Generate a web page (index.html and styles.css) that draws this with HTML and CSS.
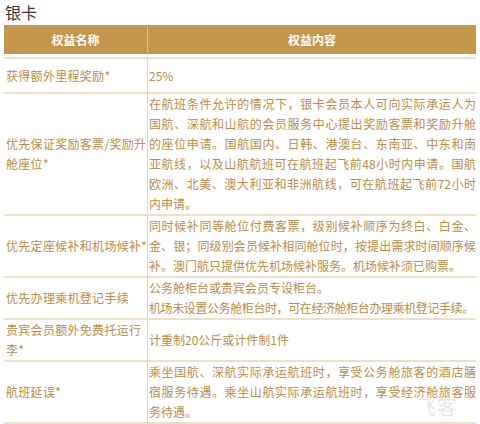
FILE: index.html
```html
<!DOCTYPE html>
<html lang="zh-CN">
<head>
<meta charset="utf-8">
<title>银卡</title>
<link rel="stylesheet" href="styles.css">
</head>
<body>
<div class="page">
  <h2 class="title">银卡</h2>
  <table class="benefits">
    <colgroup><col class="c-name"><col class="c-desc"></colgroup>
    <thead>
      <tr><th class="name">权益名称</th><th>权益内容</th></tr>
    </thead>
    <tbody>
      <tr class="r1"><td class="name">获得额外里程奖励*</td><td>25%</td></tr>
      <tr>
        <td class="name"><span class="ln">优先保证奖励客票/奖励升</span><span class="ln">舱座位*</span></td>
        <td><span class="ln j">在航班条件允许的情况下，银卡会员本人可向实际承运人为</span><span class="ln j">国航、深航和山航的会员服务中心提出奖励客票和奖励升舱</span><span class="ln j">的座位申请。国航国内、日韩、港澳台、东南亚、中东和南</span><span class="ln j">亚航线，以及山航航班可在航班起飞前48小时内申请。国航</span><span class="ln j">欧洲、北美、澳大利亚和非洲航线，可在航班起飞前72小时</span><span class="ln">内申请。</span></td>
      </tr>
      <tr>
        <td class="name">优先定座候补和机场候补*</td>
        <td><span class="ln j">同时候补同等舱位付费客票，级别候补顺序为终白、白金、</span><span class="ln j">金、银；同级别会员候补相同舱位时，按提出需求时间顺序候</span><span class="ln">补。澳门航只提供优先机场候补服务。机场候补须已购票。</span></td>
      </tr>
      <tr>
        <td class="name">优先办理乘机登记手续</td>
        <td><span class="ln">公务舱柜台或贵宾会员专设柜台。</span><span class="ln tight">机场未设置公务舱柜台时，可在经济舱柜台办理乘机登记手续。</span></td>
      </tr>
      <tr>
        <td class="name"><span class="ln">贵宾会员额外免费托运行</span><span class="ln">李*</span></td>
        <td>计重制20公斤或计件制1件</td>
      </tr>
      <tr>
        <td class="name">航班延误*</td>
        <td><span class="ln j">乘坐国航、深航实际承运航班时，享受公务舱旅客的酒店膳</span><span class="ln j">宿服务待遇。乘坐山航实际承运航班时，享受经济舱旅客服</span><span class="ln">务待遇。</span></td>
      </tr>
    </tbody>
  </table>
  <div class="watermark">飞客</div>
</div>
</body>
</html>
```
FILE: styles.css
```css
html, body {
  margin: 0;
  padding: 0;
  background: #ffffff;
}
body {
  font-family: "Noto Sans CJK SC", "Noto Sans", "Liberation Sans", sans-serif;
}
.page {
  position: relative;
  width: 480px;
  height: 424px;
  overflow: hidden;
  padding: 0 4px;
  box-sizing: border-box;
}
.title {
  margin: 3px 0 4px 1px;
  font-size: 16px;
  line-height: 18px;
  font-weight: normal;
  color: #333333;
}
.benefits {
  width: 472px;
  table-layout: fixed;
  border-collapse: separate;
  border-spacing: 0;
  font-size: 12px;
  line-height: 20px;
  color: #bb8c47;
}
.c-name { width: 144px; }
.c-desc { width: 328px; }
.benefits th {
  height: 29px;
  padding: 0;
  background: #c5954c;
  color: #ffffff;
  font-weight: bold;
  text-align: center;
  border-bottom: 3px solid #ffffff;
}
.benefits th.name {
  border-right: 1px solid #dcb987;
}
.benefits td {
  padding: 0 0 0 1px;
  vertical-align: middle;
  white-space: nowrap;
  border-bottom: 2px solid #eedfc6;
}
.benefits tbody tr:first-child td {
  border-top: 2px solid #eedfc6;
}
.benefits td.name {
  border-right: 1px solid #ead6b5;
  padding-left: 2px;
  letter-spacing: 0.3px;
}
.benefits tr.r1 td {
  height: 33px;
}
.ln {
  display: block;
  white-space: nowrap;
}
.ln.j {
  text-align: justify;
  text-align-last: justify;
  white-space: normal;
}
.ln.tight {
  letter-spacing: -0.4px;
}
.watermark {
  position: absolute;
  right: 22px;
  bottom: 5px;
  font-size: 20px;
  line-height: 24px;
  letter-spacing: 1px;
  color: rgba(205, 205, 210, 0.5);
}
```
